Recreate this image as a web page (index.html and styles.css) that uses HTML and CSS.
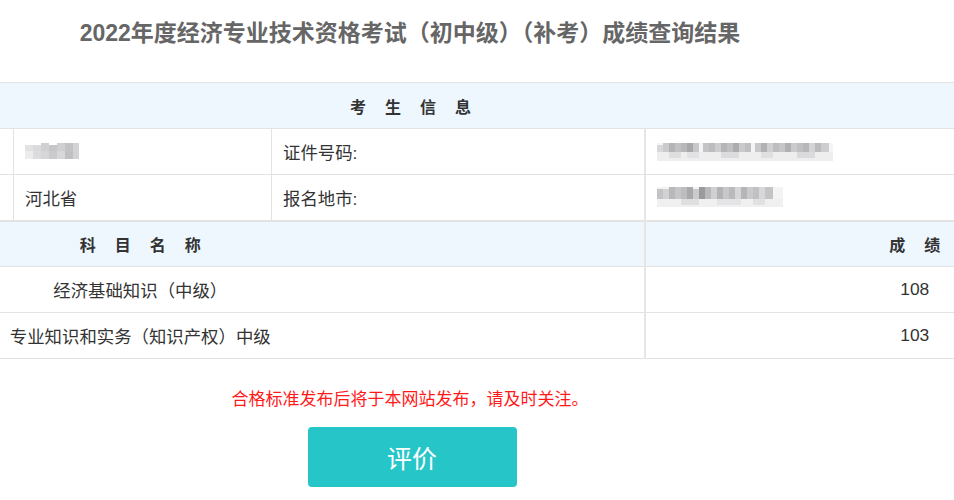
FILE: index.html
```html
<!DOCTYPE html>
<html lang="zh-CN">
<head>
<meta charset="utf-8">
<title>成绩查询结果</title>
<link rel="stylesheet" href="styles.css">
</head>
<body>
<div class="page">
  <h1 class="title">2022年度经济专业技术资格考试（初中级）（补考）成绩查询结果</h1>
  <table class="grid">
    <colgroup>
      <col class="c1"><col class="c2"><col class="c3"><col class="c4">
    </colgroup>
    <tr class="head head-top">
      <th colspan="4"><span class="spaced"><span>考</span><span>生</span><span>信</span><span>息</span></span></th>
    </tr>
    <tr class="row">
      <td></td>
      <td><svg class="mosaic" width="56" height="18" viewBox="0 0 56 18"><rect x="0" y="2" width="8" height="6" fill="#e2e2e4"/><rect x="8" y="2" width="8" height="6" fill="#dadadc"/><rect x="16" y="0" width="8" height="8" fill="#d0d0d2"/><rect x="24" y="2" width="8" height="6" fill="#c6c6c8"/><rect x="32" y="0" width="8" height="8" fill="#cfcfd1"/><rect x="40" y="0" width="8" height="8" fill="#c3c3c5"/><rect x="48" y="0" width="6" height="8" fill="#d4d4d6"/><rect x="0" y="8" width="8" height="8" fill="#ececee"/><rect x="8" y="8" width="8" height="8" fill="#dcdcde"/><rect x="16" y="8" width="8" height="8" fill="#d6d6d8"/><rect x="24" y="8" width="8" height="8" fill="#cacacc"/><rect x="32" y="8" width="8" height="8" fill="#d8d8da"/><rect x="40" y="8" width="8" height="8" fill="#c0c0c2"/><rect x="48" y="8" width="6" height="8" fill="#d2d2d4"/></svg></td>
      <td>证件号码:</td>
      <td class="score-col"><svg class="mosaic" width="176" height="18" viewBox="0 0 176 18"><rect x="0" y="0" width="176" height="18" fill="#f4f4f5"/><rect x="0" y="2" width="6" height="7" fill="#d8d8da"/><rect x="6" y="0" width="6" height="9" fill="#cacacc"/><rect x="12" y="0" width="6" height="9" fill="#b4b4b6"/><rect x="18" y="0" width="6" height="9" fill="#c2c2c4"/><rect x="24" y="0" width="6" height="9" fill="#b8b8ba"/><rect x="30" y="0" width="6" height="9" fill="#a8a8aa"/><rect x="36" y="0" width="6" height="9" fill="#c8c8ca"/><rect x="46" y="0" width="6" height="9" fill="#c4c4c6"/><rect x="52" y="0" width="6" height="9" fill="#bcbcbe"/><rect x="58" y="0" width="6" height="9" fill="#cdcdcf"/><rect x="64" y="0" width="6" height="9" fill="#b6b6b8"/><rect x="70" y="0" width="6" height="9" fill="#c0c0c2"/><rect x="76" y="0" width="6" height="9" fill="#adadaf"/><rect x="82" y="0" width="6" height="9" fill="#cacacc"/><rect x="88" y="0" width="6" height="9" fill="#bfbfc1"/><rect x="98" y="0" width="6" height="9" fill="#c8c8ca"/><rect x="104" y="0" width="6" height="9" fill="#b2b2b4"/><rect x="110" y="0" width="6" height="9" fill="#cfcfd1"/><rect x="116" y="0" width="6" height="9" fill="#bdbdbf"/><rect x="122" y="0" width="6" height="9" fill="#c6c6c8"/><rect x="128" y="0" width="6" height="9" fill="#b0b0b2"/><rect x="134" y="0" width="6" height="9" fill="#cbcbcd"/><rect x="140" y="0" width="6" height="9" fill="#c0c0c2"/><rect x="146" y="0" width="6" height="9" fill="#b7b7b9"/><rect x="152" y="0" width="6" height="9" fill="#d4d4d6"/><rect x="158" y="0" width="6" height="9" fill="#bbbbbd"/><rect x="164" y="0" width="8" height="9" fill="#cdcdcf"/><rect x="0" y="9" width="176" height="9" fill="#eeeeef"/><rect x="12" y="9" width="12" height="6" fill="#dedee0"/><rect x="30" y="9" width="12" height="6" fill="#e2e2e4"/><rect x="64" y="9" width="18" height="6" fill="#dcdcde"/><rect x="104" y="9" width="12" height="6" fill="#e0e0e2"/><rect x="140" y="9" width="18" height="6" fill="#dadadc"/></svg></td>
    </tr>
    <tr class="row">
      <td></td>
      <td>河北省</td>
      <td>报名地市:</td>
      <td class="score-col"><svg class="mosaic" width="126" height="20" viewBox="0 0 126 20"><rect x="0" y="0" width="126" height="20" fill="#f3f3f4"/><rect x="0" y="2" width="6" height="10" fill="#c4c4c6"/><rect x="6" y="2" width="6" height="10" fill="#d2d2d4"/><rect x="12" y="0" width="6" height="12" fill="#b8b8ba"/><rect x="18" y="0" width="6" height="12" fill="#c6c6c8"/><rect x="24" y="0" width="6" height="12" fill="#bdbdbf"/><rect x="30" y="0" width="6" height="12" fill="#a9a9ab"/><rect x="36" y="2" width="6" height="10" fill="#cbcbcd"/><rect x="42" y="0" width="6" height="12" fill="#9a9a9c"/><rect x="48" y="0" width="6" height="12" fill="#b9b9bb"/><rect x="54" y="0" width="6" height="12" fill="#d0d0d2"/><rect x="60" y="0" width="6" height="12" fill="#b3b3b5"/><rect x="66" y="0" width="6" height="12" fill="#c7c7c9"/><rect x="72" y="0" width="6" height="12" fill="#bababc"/><rect x="78" y="0" width="6" height="12" fill="#d6d6d8"/><rect x="84" y="0" width="6" height="12" fill="#b5b5b7"/><rect x="90" y="0" width="6" height="12" fill="#cacacc"/><rect x="96" y="0" width="6" height="12" fill="#c1c1c3"/><rect x="102" y="0" width="6" height="12" fill="#d8d8da"/><rect x="108" y="0" width="8" height="12" fill="#c4c4c6"/><rect x="0" y="12" width="126" height="8" fill="#f0f0f1"/><rect x="24" y="12" width="18" height="6" fill="#dfdfe1"/><rect x="60" y="12" width="24" height="6" fill="#e4e4e6"/><rect x="96" y="12" width="12" height="6" fill="#e1e1e3"/></svg></td>
    </tr>
    <tr class="head head-split">
      <th colspan="3"><span class="spaced"><span>科</span><span>目</span><span>名</span><span>称</span></span></th>
      <th class="score-col"><span class="spaced"><span>成</span><span>绩</span></span></th>
    </tr>
    <tr class="row subject">
      <td colspan="3">经济基础知识（中级）</td>
      <td class="score-col">108</td>
    </tr>
    <tr class="row subject">
      <td colspan="3">专业知识和实务（知识产权）中级</td>
      <td class="score-col">103</td>
    </tr>
  </table>
  <p class="notice">合格标准发布后将于本网站发布，请及时关注。</p>
  <div class="actions">
    <button class="btn" type="button">评价</button>
  </div>
</div>
</body>
</html>
```
FILE: styles.css
```css
html, body {
  margin: 0;
  padding: 0;
  overflow: hidden;
  background: #fff;
}
body {
  font-family: "Liberation Sans", "Noto Sans CJK SC", sans-serif;
  color: #333;
}
.page {
  width: 1548px;
  margin-left: -364px;
  display: flex;
  flex-direction: column;
  align-items: stretch;
}
.title {
  margin: 0 0 16px;
  height: 66px;
  line-height: 66px;
  text-align: center;
  font-size: 23px;
  font-weight: bold;
  color: #666;
  font-family: "Liberation Sans", "Noto Sans CJK SC", sans-serif;
}
.grid {
  width: 1548px;
  border-collapse: collapse;
  table-layout: fixed;
}
.c1 { width: 377px; }
.c2 { width: 258px; }
.c3 { width: 373px; }
.c4 { width: 540px; }
.grid th, .grid td {
  border: 1px solid #e3e3e3;
  height: 46px;
  padding: 0 11px;
  font-size: 17.4px;
  box-sizing: border-box;
}
.grid td {
  text-align: left;
  color: #333;
}
.head th {
  background: #eef6fe;
  font-size: 16px;
  font-weight: bold;
  color: #333;
  text-align: center;
}
.head-top th {
  height: 46px;
}
.head-split th {
  border-top: 2px solid #e3e3e3;
}
.spaced {
  display: inline-flex;
  gap: 19px;
  vertical-align: middle;
}
.grid .score-col {
  border-left: 2px solid #e6e6e6;
}
.subject td {
  text-align: center;
}
.mosaic {
  display: block;
}
.notice {
  margin: 29px 0 0;
  height: 24px;
  line-height: 24px;
  text-align: center;
  color: #ff1a1a;
  font-size: 17px;
}
.actions {
  display: flex;
  justify-content: center;
  margin-top: 15px;
  padding-left: 4px;
}
.btn {
  width: 209px;
  height: 60px;
  border: none;
  border-radius: 4px;
  background: #26c6c8;
  color: #fff;
  font-size: 25px;
  font-family: "Noto Sans CJK SC", sans-serif;
  cursor: pointer;
}
```
